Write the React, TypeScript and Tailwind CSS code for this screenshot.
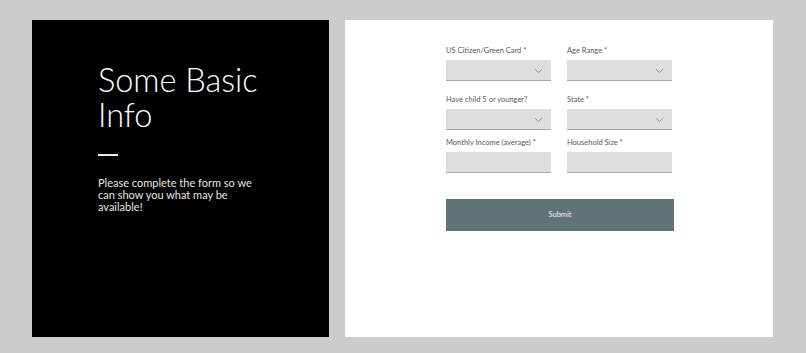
import React from "react";

function Chevron() {
  return (
    <svg width="9" height="6" viewBox="0 0 9 6" fill="none" className="absolute right-[8px] top-[8px]">
      <path d="M0.8 1 L4.5 4.6 L8.2 1" stroke="#888" strokeWidth="0.9" />
    </svg>
  );
}

function Field({ label, select }: { label: string; select?: boolean }) {
  return (
    <div className="flex flex-col w-[105px]">
      <div className="text-[7.5px] leading-[10px] text-[#5a5a5a] h-[10px] whitespace-nowrap">{label}</div>
      <div className="relative mt-[4px] h-[21px] bg-[#dedede] border-b border-[#a8a8a8]">
        {select && <Chevron />}
      </div>
    </div>
  );
}

export default function App() {
  return (
    <div
      className="w-[806px] h-[353px] bg-[#cccccc] flex pt-[20px] pl-[32px] gap-[16px]"
      style={{ fontFamily: "Lato, 'Liberation Sans', sans-serif" }}
    >
      <div className="w-[297px] h-[317px] bg-black pl-[66px] pt-[42px] flex flex-col">
        <h1 className="text-white text-[32.5px] leading-[35px] font-light">
          Some Basic
          <br />
          Info
        </h1>
        <div className="w-[20px] h-[1.5px] bg-[#e8e8e8] mt-[22px]"></div>
        <p className="text-[#e6e6e6] text-[11px] leading-[12px] mt-[21px] w-[170px]">
          Please complete the form so we can show you what may be available!
        </p>
      </div>
      <div className="w-[428px] h-[317px] bg-white pl-[101px] pt-[26px] flex flex-col">
        <div className="flex gap-[16px]">
          <Field label="US Citizen/Green Card *" select />
          <Field label="Age Range *" select />
        </div>
        <div className="flex gap-[16px] mt-[14px]">
          <Field label="Have child 5 or younger?" select />
          <Field label="State *" select />
        </div>
        <div className="flex gap-[16px] mt-[8px]">
          <Field label="Monthly Income (average) *" />
          <Field label="Household Size *" />
        </div>
        <button className="mt-[26px] w-[228px] h-[32px] bg-[#5f7479] text-[#f0f0f0] text-[7.5px] flex items-center justify-center">
          Submit
        </button>
      </div>
    </div>
  );
}
